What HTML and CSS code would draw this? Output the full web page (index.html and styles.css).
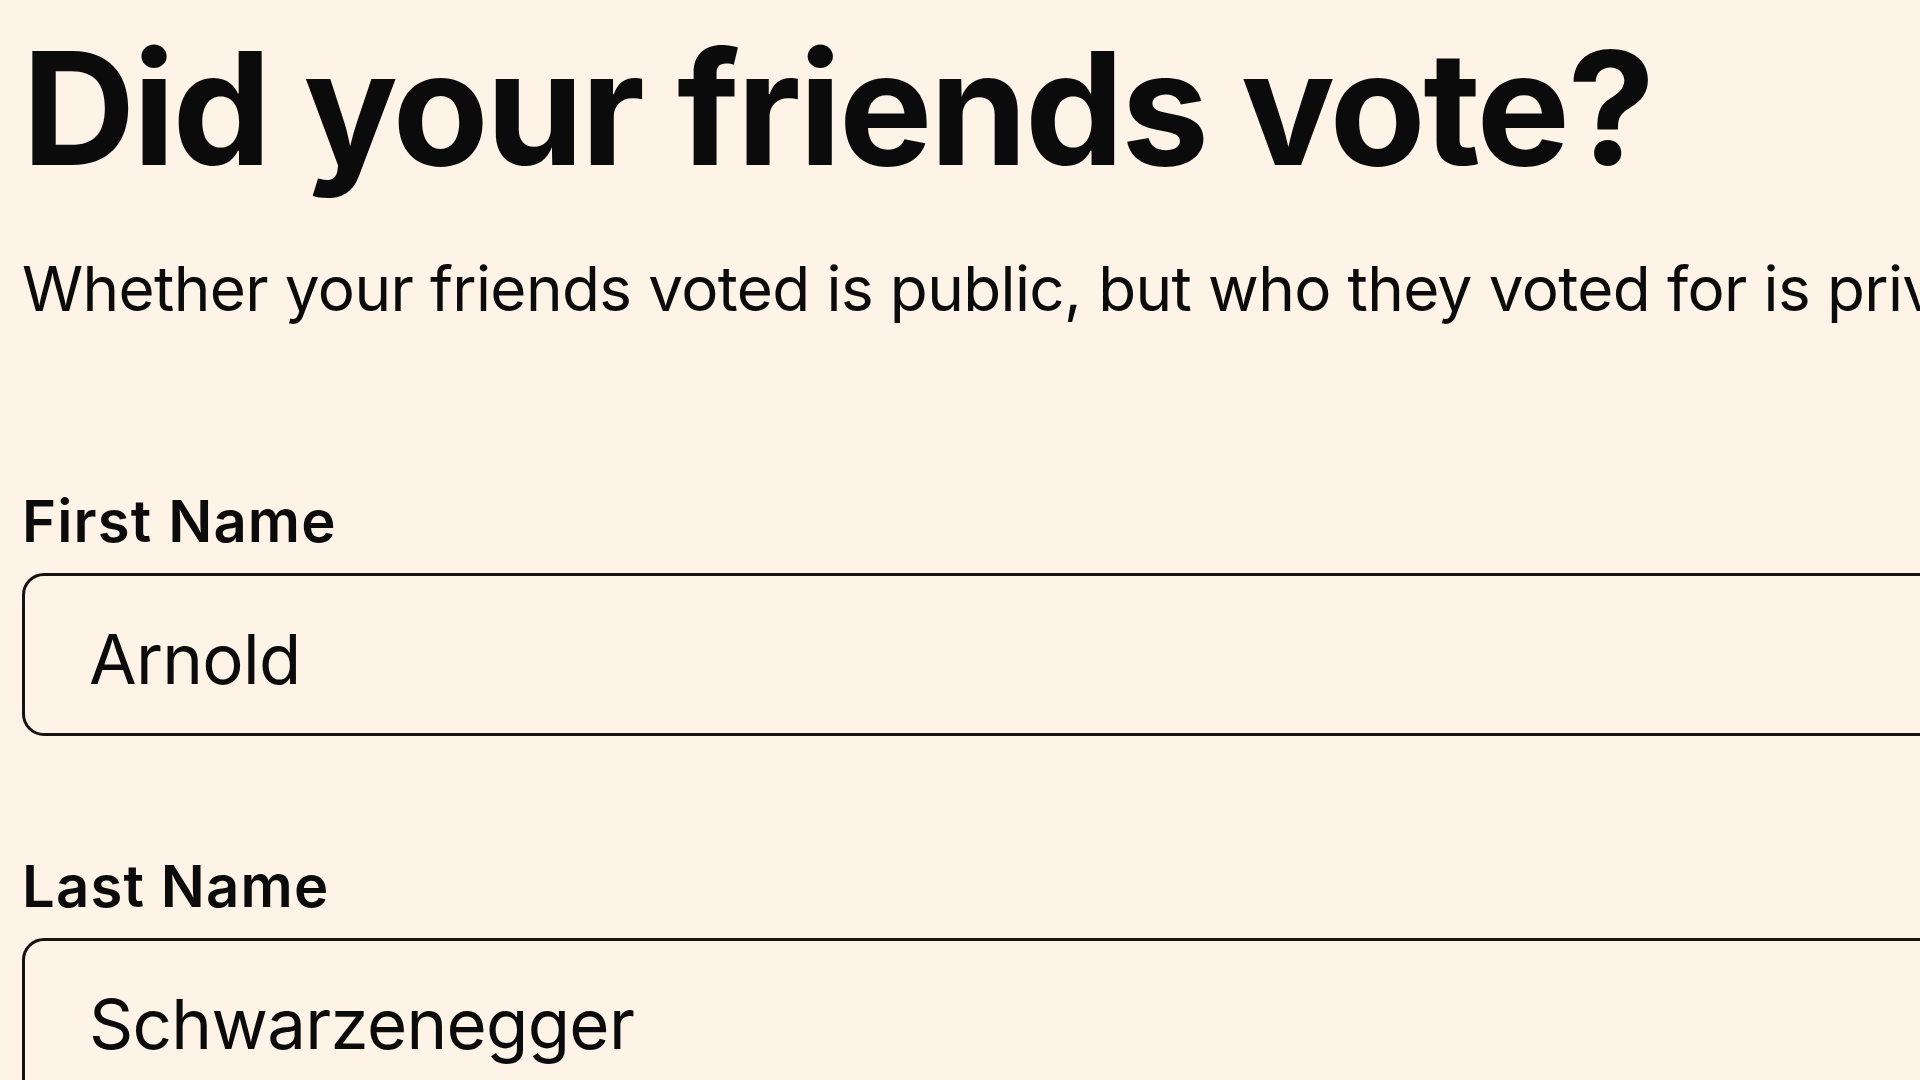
FILE: index.html
```html
<!DOCTYPE html>
<html lang="en">
<head>
<meta charset="utf-8">
<title>Did your friends vote?</title>
<link rel="stylesheet" href="styles.css">
</head>
<body>
<main class="page">
  <h1 class="title">Did your friends vote?</h1>
  <p class="subtitle">Whether your friends voted is public, but who they voted for is private.</p>
  <form class="form">
    <div class="field">
      <label class="label" for="first">First Name</label>
      <input class="input" id="first" type="text" value="Arnold">
    </div>
    <div class="field">
      <label class="label" for="last">Last Name</label>
      <input class="input" id="last" type="text" value="Schwarzenegger">
    </div>
  </form>
</main>
</body>
</html>
```
FILE: styles.css
```css
html, body {
  margin: 0;
  padding: 0;
  background: #fdf3e6;
  overflow: hidden;
}
body {
  font-family: Inter, "Noto Sans", sans-serif;
  color: #0b0b0b;
  width: 1920px;
  height: 1080px;
}
.page {
  display: flex;
  flex-direction: column;
  padding: 30px 0 0 22px;
  white-space: nowrap;
}
.title {
  margin: 0;
  font-size: 157px;
  line-height: 1;
  font-weight: 700;
  letter-spacing: -0.017em;
}
.subtitle {
  margin: 71px 0 0;
  font-size: 62px;
  line-height: 1;
  font-weight: 400;
  letter-spacing: -0.01em;
}
.form {
  display: flex;
  flex-direction: column;
  gap: 121px;
  margin-top: 172px;
}
.field {
  display: flex;
  flex-direction: column;
  gap: 23px;
}
.label {
  font-size: 58px;
  line-height: 1;
  font-weight: 600;
  letter-spacing: 0.02em;
}
.input {
  box-sizing: border-box;
  width: 2100px;
  height: 163px;
  margin: 0;
  padding: 8px 64px 0;
  border: 3px solid #171311;
  border-radius: 22px;
  background: transparent;
  font-family: Inter, "Noto Sans", sans-serif;
  font-size: 69px;
  font-weight: 400;
  color: #0b0b0b;
  letter-spacing: -0.01em;
  outline: none;
}
```
